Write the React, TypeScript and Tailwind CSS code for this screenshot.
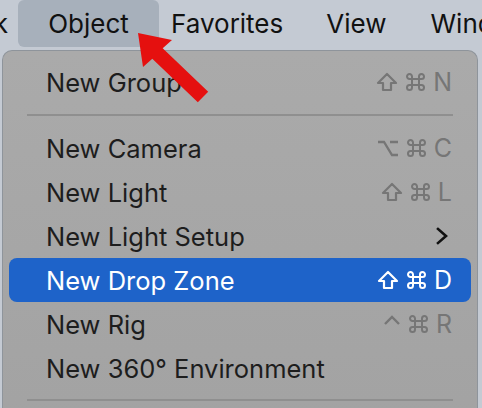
import React from 'react';

type Item = { label: string; keys?: string[]; submenu?: boolean; active?: boolean };

const groups: Item[][] = [
  [{ label: 'New Group', keys: ['shift', 'cmd', 'N'] }],
  [
    { label: 'New Camera', keys: ['opt', 'cmd', 'C'] },
    { label: 'New Light', keys: ['shift', 'cmd', 'L'] },
    { label: 'New Light Setup', submenu: true },
    { label: 'New Drop Zone', keys: ['shift', 'cmd', 'D'], active: true },
    { label: 'New Rig', keys: ['ctrl', 'cmd', 'R'] },
    { label: 'New 360° Environment' },
  ],
];

const sans = "font-['Inter','Liberation_Sans',sans-serif]";

function KeyGlyph({ k }: { k: string }) {
  if (k === 'shift')
    return (
      <svg width="22" height="20" viewBox="0 0 22 20">
        <path d="M11 2 L20 11 L15 11 L15 18 L7 18 L7 11 L2 11 Z" fill="none" stroke="currentColor" strokeWidth="2.2" strokeLinejoin="round" />
      </svg>
    );
  if (k === 'opt')
    return (
      <svg width="22" height="20" viewBox="0 0 22 20">
        <path d="M1 4 L7 4 L15 17 L21 17 M13 4 L21 4" fill="none" stroke="currentColor" strokeWidth="2.3" />
      </svg>
    );
  if (k === 'ctrl')
    return (
      <svg width="18" height="20" viewBox="0 0 18 20">
        <path d="M2 10 L9 3 L16 10" fill="none" stroke="currentColor" strokeWidth="2.4" />
      </svg>
    );
  if (k === 'cmd')
    return (
      <svg width="21" height="20" viewBox="0 0 21 20">
        <path
          d="M7 7 L14 7 L14 13 L7 13 Z M7 7 L7 4.5 A2.5 2.5 0 1 0 4.5 7 Z M14 7 L14 4.5 A2.5 2.5 0 1 1 16.5 7 Z M7 13 L7 15.5 A2.5 2.5 0 1 1 4.5 13 Z M14 13 L14 15.5 A2.5 2.5 0 1 0 16.5 13 Z"
          fill="none"
          stroke="currentColor"
          strokeWidth="2"
          strokeLinejoin="round"
        />
      </svg>
    );
  return <span className="text-[25px] leading-none">{k}</span>;
}

function Shortcut({ keys, active }: { keys: string[]; active?: boolean }) {
  return (
    <div className={`flex items-center gap-[7px] ${active ? 'text-white' : 'text-[#767676]'}`}>
      {keys.map((k, i) => (
        <KeyGlyph key={i} k={k} />
      ))}
    </div>
  );
}

function Row({ item }: { item: Item }) {
  return (
    <div
      className={`flex h-[44px] items-center justify-between rounded-[8px] pl-[37px] pr-[19px] ${
        item.active ? 'bg-[#1e63c9] text-white' : 'text-[#1d1d1d]'
      }`}
    >
      <span className="pt-[2px] text-[25.5px] leading-none">{item.label}</span>
      {item.keys && <Shortcut keys={item.keys} active={item.active} />}
      {item.submenu && (
        <svg width="14" height="18" viewBox="0 0 14 18" className="mr-[3px]">
          <polyline points="3,2 11,9 3,16" fill="none" stroke="#111" strokeWidth="2.6" strokeLinecap="square" />
        </svg>
      )}
    </div>
  );
}

export default function App() {
  return (
    <div className={`relative h-[408px] w-[482px] overflow-hidden bg-[#c4cad3] ${sans}`}>
      <div className="flex h-[50px] items-start whitespace-nowrap text-[26px] text-[#111]">
        <div className="flex h-[47px] w-[8px] shrink-0 items-center justify-end">k</div>
        <div className="ml-[10px] flex h-[47px] w-[141px] shrink-0 items-center justify-center rounded-[6px] bg-[#a7b0bb]">
          Object
        </div>
        <div className="ml-[12px] flex h-[47px] shrink-0 items-center">Favorites</div>
        <div className="ml-[43px] flex h-[47px] shrink-0 items-center">View</div>
        <div className="ml-[44px] flex h-[47px] shrink-0 items-center">Window</div>
      </div>

      <div className="ml-[2px] mr-[4px] h-[400px] rounded-t-[10px] border-t border-l border-r border-[#8e949b] bg-gradient-to-b from-[#aaaaaa] to-[#a2a2a2] px-[6px] pt-[9px]">
        {groups.map((g, gi) => (
          <div key={gi}>
            {gi > 0 && <div className="mx-[18px] my-[10px] h-[2px] bg-[#8f8f8f]" />}
            {g.map((item) => (
              <Row key={item.label} item={item} />
            ))}
          </div>
        ))}
        <div className="mx-[18px] mt-[9px] h-[2px] bg-[#8f8f8f]" />
      </div>

      <svg className="absolute left-0 top-0" width="482" height="408" viewBox="0 0 482 408">
        <polygon
          points="138,33 172,40 162.7,48.2 208.2,91.7 197.8,102.3 152.3,58.8 143,67"
          fill="#e5100f"
        />
      </svg>
    </div>
  );
}
